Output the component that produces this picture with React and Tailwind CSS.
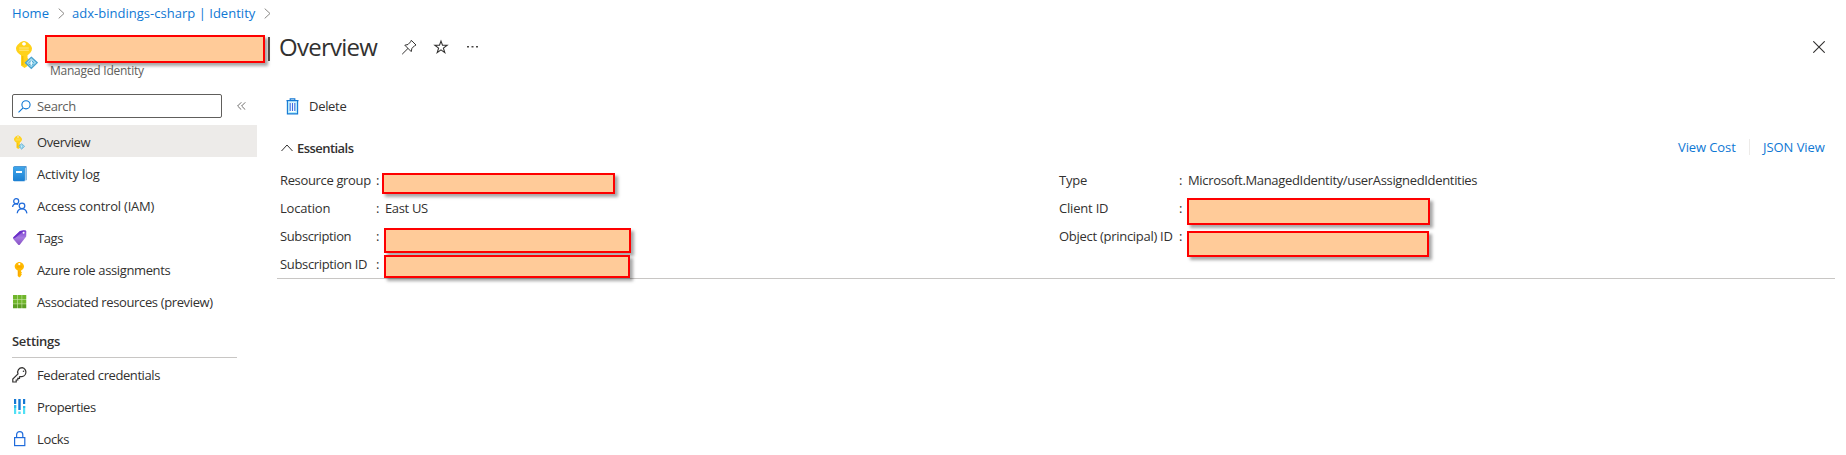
import React from "react";

function KeyIdentity({ className }) {
  return (
    <svg className={className} viewBox="0 0 22 30" fill="none">
      <path fillRule="evenodd" fill="#FFD21A" d="M8 1C11 1 16 5.500 16 8.500C16 11.500 13.500 14 11.500 15.300V18L13 19.500L11.500 21L13 22.500L11.500 24.500V26L8.500 28L5 25.500V15.300C2.500 14 0 11.500 0 8.500C0 5.500 5 1 8 1ZM8 2.300C7 2.300 6.100 3 6.100 3.900C6.100 4.800 7 5.400 8 5.400C9 5.400 9.900 4.800 9.900 3.900C9.900 3 9 2.300 8 2.300Z" />
      <path d="M3.200 8H12.800M3.200 10.200H12.800" stroke="#FFE98A" strokeWidth="1" />
      <path d="M6.800 16V25" stroke="#F0B400" strokeWidth="1" />
      <path fill="#A8DFF2" stroke="#4BA3CF" strokeWidth="1.300" d="M15.300 17.300L21.200 22.700L15.300 28.300L9.500 22.700Z" />
      <path d="M12.300 23L15.300 20.500L18.300 23M12.800 24L15.300 25.500L17.800 24" stroke="#4BA3CF" strokeWidth="1" />
      <path d="M15.300 20.500V25.500" stroke="#fff" strokeWidth="1" />
    </svg>
  );
}

function Book() {
  return (
    <svg className="h-4 w-4" viewBox="0 0 16 16">
      <defs>
        <linearGradient id="bk" x1="0" y1="0" x2="0" y2="1">
          <stop stopColor="#3EA5EA" />
          <stop offset="1" stopColor="#1B7FD2" />
        </linearGradient>
      </defs>
      <path fill="#1476C6" d="M2.500 .2H14.500V14.200H12V2.500H1V2C1 1.200 1.700 .2 2.500 .2Z" />
      <path fill="#DCEEFA" d="M12.700 1.500H13.700V14.200H12.700Z" />
      <path fill="url(#bk)" d="M1.800 1H12.700V15.200H2.200C1.500 15.200 1 14.700 1 14V2C1 1.500 1.300 1 1.800 1Z" />
      <rect x="4" y="5" width="6" height="2" fill="#fff" />
    </svg>
  );
}

function People() {
  return (
    <svg className="h-4 w-4" viewBox="0 0 16 16" fill="none" stroke="#1F6BDB" strokeWidth="1.250">
      <circle cx="4.200" cy="3.200" r="2.500" />
      <path d="M.6 9C.8 7 2.200 5.800 4 5.800C4.800 5.800 5.500 6 6 6.400" />
      <circle cx="10" cy="7.800" r="2.800" />
      <path d="M5.200 15.300C5.500 12.500 7.400 10.800 10 10.800C12.600 10.800 14.500 12.500 14.900 15.300" />
    </svg>
  );
}

function Tag() {
  return (
    <svg className="h-4 w-4" viewBox="0 0 16 16">
      <defs>
        <linearGradient id="tg" x1="0" y1="0" x2="0" y2="1">
          <stop stopColor="#7B3FD0" />
          <stop offset=".5" stopColor="#A67AE0" />
          <stop offset="1" stopColor="#8650C4" />
        </linearGradient>
      </defs>
      <path fill="url(#tg)" d="M8 .9L12.800 .2C13.600 .1 14.300 .7 14.300 1.500L14.200 6.500L7.800 14.800C7.400 15.200 6.700 15.200 6.200 14.800L1.300 8.900C.9 8.400 .9 7.800 1.400 7.300Z" />
      <path fill="#6A2FC8" d="M8 .9L12.800 .2L10.500 1.900L3 8.100L1.500 8.600Q.9 7.800 1.400 7.300Z" />
      <circle cx="11.600" cy="2.800" r="1" fill="#fff" />
    </svg>
  );
}

function GoldKey() {
  return (
    <svg className="h-4 w-4" viewBox="0 0 16 16">
      <path fillRule="evenodd" fill="#FFB900" d="M7.300 0C9.500 0 12 2.200 12 4.400C12 6.200 10.500 7.700 9.100 8.400V9.700L10 10.500L9.100 11.400L10 12.300L9.100 13.200V13.900L7.300 15.500L5.700 13.900V8.400C4.200 7.700 2.700 6.200 2.700 4.400C2.700 2.200 5.200 0 7.300 0ZM7.300 1A1.100 1.100 0 1 0 7.300 3.200A1.100 1.100 0 1 0 7.300 1Z" />
      <path d="M4.700 4.900H10M6.700 8.700V13.700" stroke="#F59B00" strokeWidth=".8" />
    </svg>
  );
}

function GreenGrid() {
  return (
    <svg className="h-4 w-4" viewBox="0 0 16 16">
      <rect x="1" y="1" width="13.200" height="13.200" fill="#C9E6A8" />
      {[1, 5.600, 10.200].map((y, r) =>
        [1, 5.600, 10.200].map((x) => (
          <rect key={`${x}-${y}`} x={x} y={y} width="4" height="4" fill={r === 2 ? "#5C9E22" : "#70B62C"} />
        ))
      )}
    </svg>
  );
}

function OutlineKey() {
  return (
    <svg className="h-4 w-4" viewBox="0 0 16 16" fill="none" stroke="#323130" strokeWidth="1.200">
      <path d="M10.200 .7A4.500 4.500 0 1 1 8.600 9.600L7.500 9.800V11.300H5.800V13H4.200V15H.8V12.100L6 6.900A4.500 4.500 0 0 1 10.200 .7Z" />
      <circle cx="11.500" cy="4.200" r=".8" fill="#323130" stroke="none" />
    </svg>
  );
}

function Bars() {
  return (
    <svg className="h-4 w-4" viewBox="0 0 16 16">
      <path fill="#1478D4" d="M2 0H4.200V5H2ZM6.300 0H8.700V11H6.300ZM11 0H13.200V5H11Z" />
      <path fill="#50E0F5" d="M2 6H4.200V15H2ZM6.300 12.500H8.700V15H6.300ZM11 7H13.200V15H11Z" />
      <path fill="#32B8EA" d="M2 6H4.200V9H2ZM11 7H13.200V9H11Z" />
    </svg>
  );
}

function Lock() {
  return (
    <svg className="h-4 w-4" viewBox="0 0 16 16" fill="none" stroke="#1F6BDB" strokeWidth="1.200">
      <rect x="2.600" y="6.600" width="10.200" height="8" />
      <path d="M4.600 6.600V3.700C4.600 1.900 5.900 .7 7.700 .7C9.500 .7 10.800 1.900 10.800 3.700V6.600" />
    </svg>
  );
}

function Chevron({ className }) {
  return (
    <svg className={className} viewBox="0 0 7 11" fill="none" stroke="#8a8886" strokeWidth="1">
      <path d="M.7 .6L6 5.500L.7 10.400" />
    </svg>
  );
}

function Redacted({ className }) {
  return (
    <div className={`shrink-0 border-2 border-[#fe0000] bg-[#ffcb99] shadow-[3px_3px_3px_rgba(0,0,0,0.35)] ${className}`} />
  );
}

function NavItem({ icon, label, tracking, active, pad = "pt-[2px]" }) {
  return (
    <a className={`flex h-8 w-[257px] items-center pl-3 ${pad} ${active ? "bg-[#edebe9]" : ""}`}>
      <span className="flex w-[25px]">{icon}</span>
      <span className={`whitespace-nowrap ${tracking}`}>{label}</span>
    </a>
  );
}

function Field({ label, tracking, labelWidth, children }) {
  return (
    <div className="flex h-7">
      <span className={`shrink-0 whitespace-nowrap leading-7 ${tracking} ${labelWidth}`}>{label}</span>
      <span className="w-2 shrink-0 leading-7">:</span>
      {children}
    </div>
  );
}

export default function App() {
  return (
    <div className="flex h-[455px] w-[1846px] flex-col overflow-hidden bg-white font-['Open_Sans','Noto_Sans',sans-serif] text-[13px] leading-4 text-[#323130]">
      <nav className="flex h-7 items-center pb-[2px] pl-3 text-[#0f78d4]">
        <span className="w-[46px] tracking-[0.1px]">Home</span>
        <Chevron className="mt-px h-[11px] w-[7px]" />
        <span className="ml-[7px] w-[192px] whitespace-nowrap tracking-[0.02px]">adx-bindings-csharp | Identity</span>
        <Chevron className="mt-px h-[11px] w-[7px]" />
      </nav>

      <header className="flex h-[58px] items-start">
        <KeyIdentity className="ml-4 mt-3 h-[30px] w-[22px] shrink-0" />
        <div className="ml-[7px] mt-[7px] flex w-[223px] flex-col">
          <Redacted className="relative z-10 h-7 w-[220px]" />
          <span className="ml-[5px] whitespace-nowrap text-[12px] text-[#605e5c] tracking-[-0.24px]">Managed Identity</span>
        </div>
        <div className="mt-[9px] h-6 w-[2px] bg-[#5b534e]" />
        <h1 className="ml-[9px] mt-1 w-[122px] text-[24px] leading-[30px] tracking-[-0.75px]">Overview</h1>
        <svg className="mt-[11px] h-4 w-4" viewBox="0 0 16 16" fill="none" stroke="#323130" strokeWidth="1">
          <path d="M10.300 1.300L15 6L13.600 6.700L10.900 9.400L10.200 12.600L3.800 6.200L7 5.500L9.600 2.800ZM7 9.400L1.200 15.200" />
        </svg>
        <svg className="ml-4 mt-[11px] h-4 w-4" viewBox="0 0 16 16" fill="none" stroke="#323130" strokeWidth="1.100">
          <path d="M8 2.100L9.500 6.300H14.100L10.400 9.100L11.800 13.600L8 10.900L4.200 13.600L5.600 9.100L1.900 6.300H6.500Z" />
        </svg>
        <svg className="ml-4 mt-[11px] h-4 w-4" viewBox="0 0 16 16" fill="#484644">
          <path d="M2 7H4V8.500H2ZM6.500 7H8.500V8.500H6.500ZM11 7H13V8.500H11Z" />
        </svg>
        <svg className="ml-auto mr-[21px] mt-[13px] h-3 w-3" viewBox="0 0 12 12" stroke="#323130" strokeWidth="1.100">
          <path d="M.3 .3L11.700 11.700M11.700 .3L.3 11.700" />
        </svg>
      </header>

      <div className="flex">
        <aside className="w-[277px] shrink-0">
          <div className="flex h-[39px] items-start pl-3 pt-2">
            <div className="flex h-6 w-[210px] items-center rounded-[2px] border border-[#605e5c] pl-[5px]">
              <svg className="h-[13px] w-[13px]" viewBox="0 0 13 13" fill="none" stroke="#0f78d4" strokeWidth="1.100">
                <circle cx="8" cy="4.800" r="4.100" />
                <path d="M5.100 7.800L.5 12.400" />
              </svg>
              <span className="ml-[6px] text-[#605e5c] tracking-[-0.4px]">Search</span>
            </div>
            <svg className="ml-[15px] mt-[8px] h-2 w-[9px]" viewBox="0 0 9 8" fill="none" stroke="#605e5c" strokeWidth=".9">
              <path d="M4.300 .3L.6 4L4.300 7.700M8.300 .3L4.600 4L8.300 7.700" />
            </svg>
          </div>
          <NavItem active icon={<KeyIdentity className="ml-[2px] h-[15px] w-[11px]" />} label="Overview" tracking="tracking-[-0.4px]" />
          <NavItem icon={<Book />} label="Activity log" tracking="tracking-[-0.18px]" />
          <NavItem icon={<People />} label="Access control (IAM)" tracking="tracking-[-0.21px]" />
          <NavItem icon={<Tag />} label="Tags" tracking="tracking-[-0.4px]" />
          <NavItem icon={<GoldKey />} label="Azure role assignments" tracking="tracking-[-0.37px]" />
          <NavItem icon={<GreenGrid />} label="Associated resources (preview)" tracking="tracking-[-0.37px]" />
          <div className="ml-3 flex h-[41px] w-[225px] items-end border-b border-[#c8c6c4] pb-2 font-semibold tracking-[-0.3px]">Settings</div>
          <div className="pt-px">
            <NavItem pad="" icon={<OutlineKey />} label="Federated credentials" tracking="tracking-[-0.42px]" />
            <NavItem pad="" icon={<Bars />} label="Properties" tracking="tracking-[-0.42px]" />
            <NavItem pad="" icon={<Lock />} label="Locks" tracking="tracking-[-0.35px]" />
          </div>
        </aside>

        <main className="w-[1558px]">
          <div className="flex h-[42px] items-center pb-[2px] pl-2">
            <svg className="ml-px h-[17px] w-[13px]" viewBox="0 0 14 17" fill="none" preserveAspectRatio="none">
              <path fill="#B5EDFC" d="M1.500 3.500H12.500V16H1.500Z" />
              <path fill="#fff" d="M3.700 4.500H10.300V14H3.700Z" />
              <path d="M.5 2.600H13.500M4.500 2.600V.8H9.500V2.600M1.500 2.600V15.900H12.500V2.600" stroke="#1478D4" strokeWidth="1.200" />
              <path d="M4.500 5V13M7 5V13M9.500 5V13" stroke="#3B6FE0" strokeWidth="1.200" />
            </svg>
            <span className="ml-[10px] tracking-[-0.3px]">Delete</span>
          </div>
          <div className="flex h-[38px] items-center pb-px">
            <svg className="ml-1 mt-[2px] h-2 w-3" viewBox="0 0 12 8" fill="none" stroke="#323130" strokeWidth="1">
              <path d="M.5 7L6 1L11.500 7" />
            </svg>
            <span className="ml-1 pt-[2px] font-semibold tracking-[-0.55px]">Essentials</span>
            <div className="ml-auto mr-[10px] flex items-center text-[#0f78d4]">
              <span className="w-[71px] tracking-[-0.1px]">View Cost</span>
              <span className="h-4 w-[14px] border-l border-[#edebe9]" />
              <span className="w-[62px] whitespace-nowrap tracking-[-0.05px]">JSON View</span>
            </div>
          </div>
          <section className="flex h-[113px] border-b border-[#c8c6c4] pl-[3px]">
            <div className="w-[779px]">
              <Field label="Resource group" labelWidth="w-[96px]" tracking="tracking-[-0.35px]">
                <Redacted className="-ml-[2px] mt-[7px] h-[21px] w-[233px]" />
              </Field>
              <Field label="Location" labelWidth="w-[96px]" tracking="tracking-[-0.2px]">
                <span className="ml-px leading-7 tracking-[-0.35px]">East US</span>
              </Field>
              <Field label="Subscription" labelWidth="w-[96px]" tracking="tracking-[-0.38px]">
                <Redacted className="mt-[6px] h-[25px] w-[247px]" />
              </Field>
              <Field label="Subscription ID" labelWidth="w-[96px]" tracking="tracking-[-0.34px]">
                <Redacted className="mt-[5px] h-[23px] w-[246px]" />
              </Field>
            </div>
            <div>
              <Field label="Type" labelWidth="w-[120px]" tracking="tracking-[-0.2px]">
                <span className="ml-[1px] leading-7 tracking-[-0.33px]">Microsoft.ManagedIdentity/userAssignedIdentities</span>
              </Field>
              <Field label="Client ID" labelWidth="w-[120px]" tracking="tracking-[-0.2px]">
                <Redacted className="mt-1 h-[27px] w-[243px]" />
              </Field>
              <Field label="Object (principal) ID" labelWidth="w-[120px]" tracking="tracking-[-0.28px]">
                <Redacted className="mt-[9px] h-[26px] w-[242px]" />
              </Field>
            </div>
          </section>
        </main>
      </div>
    </div>
  );
}
